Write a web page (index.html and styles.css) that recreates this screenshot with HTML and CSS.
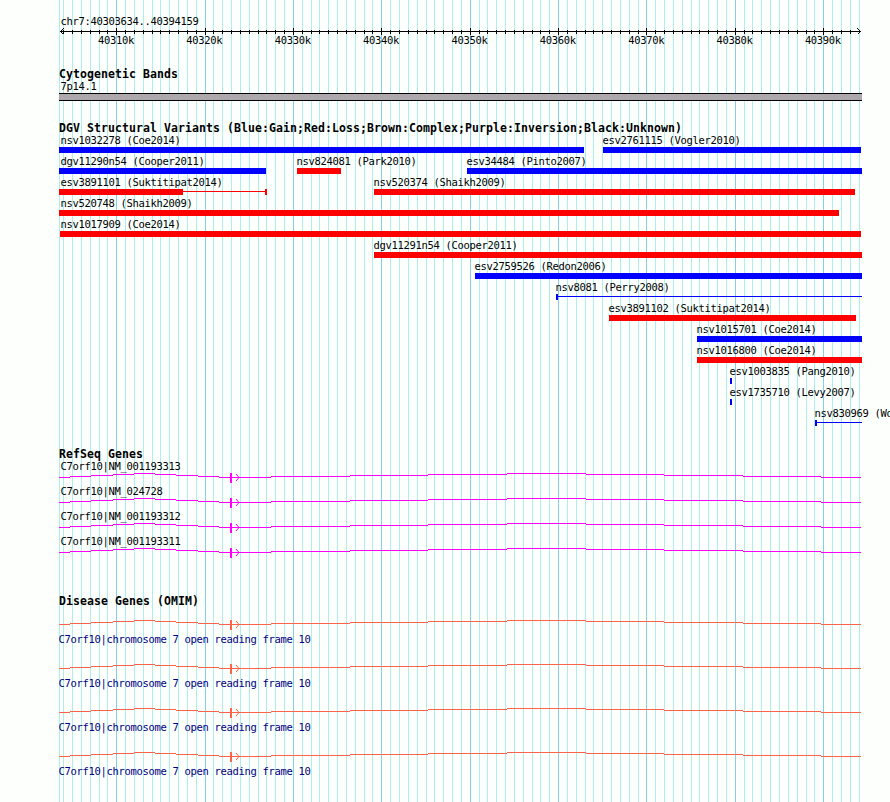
FILE: index.html
```
<!DOCTYPE html>
<html lang="en">
<head>
    <meta charset="UTF-8">
    <title>chr7:40303634..40394159</title>
    <link rel="stylesheet" href="styles.css">
</head>
<body>
    <!-- 1k and 10k grid lines, 8.83734px per kb -->
    <svg class="grid-lines" width="890" height="802" shape-rendering="crispEdges">
        <rect class="edge" x="59" y="0" width="1" height="802"/>
        <path class="minor" d="M63.18 401H862"/>
        <path class="major" d="M116.2 401H862"/>
    </svg>

    <!-- shared gene glyph: intron hat, exon, strand arrow -->
    <svg class="defs" width="0" height="0">
        <symbol id="gene" viewBox="0 0 890 13">
            <path fill="none" stroke="currentColor" shape-rendering="crispEdges" d="M59 5.5H70M70 4.5H91M91 3.5H113M113 2.5H134M134 1.5H155M155 2.5H176M176 3.5H198M198 4.5H219M219 5.5H271M271 4.5H350M350 3.5H428M428 2.5H507M507 1.5H586M586 2.5H664M664 3.5H743M743 4.5H821M821 5.5H861"/>
            <rect fill="currentColor" x="230" y="1" width="2" height="10"/>
            <path fill="none" stroke="currentColor" d="M236 2L239 5.5L236 9"/>
        </symbol>
    </svg>

    <main class="browser">
        <section class="overview">
            <div class="label region">chr7:40303634..40394159</div>
            <svg class="ruler" width="890" height="7" shape-rendering="crispEdges">
                <path class="axis" d="M60 3.5H861"/>
                <path class="ticks" d="M63.18 3.5H856"/>
                <path class="big-ticks" d="M116.2 3.5H856"/>
                <path class="arrow" d="M63.5 0.5L60.5 3.5L63.5 6.5M857.5 0.5L860.5 3.5L857.5 6.5"/>
            </svg>
            <div class="scale">
                <span>40310k</span><span>40320k</span><span>40330k</span><span>40340k</span><span>40350k</span><span>40360k</span><span>40370k</span><span>40380k</span><span>40390k</span>
            </div>
        </section>

        <section class="track cyto">
            <h2>Cytogenetic Bands</h2>
            <div class="label band-name">7p14.1</div>
            <div class="band"></div>
        </section>

        <section class="track variants">
            <h2>DGV Structural Variants (Blue:Gain;Red:Loss;Brown:Complex;Purple:Inversion;Black:Unknown)</h2>
            <div class="row">
                <div class="feature gain clipped" style="margin-left: 59px; width: 525px"><span class="label">nsv1032278 (Coe2014)</span><i class="bar"></i></div>
                <div class="feature gain" style="margin-left: 603px; width: 258px"><span class="label">esv2761115 (Vogler2010)</span><i class="bar"></i></div>
            </div>
            <div class="row">
                <div class="feature gain clipped" style="margin-left: 59px; width: 207px"><span class="label">dgv11290n54 (Cooper2011)</span><i class="bar"></i></div>
                <div class="feature loss" style="margin-left: 297px; width: 44px"><span class="label">nsv824081 (Park2010)</span><i class="bar"></i></div>
                <div class="feature gain" style="margin-left: 467px; width: 395px"><span class="label">esv34484 (Pinto2007)</span><i class="bar"></i></div>
            </div>
            <div class="row">
                <div class="feature loss clipped" style="margin-left: 59px; width: 208px">
                    <span class="label">esv3891101 (Suktitipat2014)</span>
                    <div class="parts"><i class="bar" style="width: 124px"></i><i class="line"></i><i class="cap"></i></div>
                </div>
                <div class="feature loss" style="margin-left: 374px; width: 481px"><span class="label">nsv520374 (Shaikh2009)</span><i class="bar"></i></div>
            </div>
            <div class="row">
                <div class="feature loss clipped" style="margin-left: 59px; width: 780px"><span class="label">nsv520748 (Shaikh2009)</span><i class="bar"></i></div>
            </div>
            <div class="row">
                <div class="feature loss flush" style="margin-left: 60px; width: 801px"><span class="label">nsv1017909 (Coe2014)</span><i class="bar"></i></div>
            </div>
            <div class="row">
                <div class="feature loss" style="margin-left: 374px; width: 488px"><span class="label">dgv11291n54 (Cooper2011)</span><i class="bar"></i></div>
            </div>
            <div class="row">
                <div class="feature gain" style="margin-left: 475px; width: 387px"><span class="label">esv2759526 (Redon2006)</span><i class="bar"></i></div>
            </div>
            <div class="row">
                <div class="feature gain" style="margin-left: 556px; width: 306px">
                    <span class="label">nsv8081 (Perry2008)</span>
                    <div class="parts"><i class="cap"></i><i class="line"></i></div>
                </div>
            </div>
            <div class="row">
                <div class="feature loss" style="margin-left: 609px; width: 247px"><span class="label">esv3891102 (Suktitipat2014)</span><i class="bar"></i></div>
            </div>
            <div class="row">
                <div class="feature gain" style="margin-left: 697px; width: 165px"><span class="label">nsv1015701 (Coe2014)</span><i class="bar"></i></div>
            </div>
            <div class="row">
                <div class="feature loss" style="margin-left: 697px; width: 165px"><span class="label">nsv1016800 (Coe2014)</span><i class="bar"></i></div>
            </div>
            <div class="row">
                <div class="feature gain" style="margin-left: 730px; width: 2px"><span class="label">esv1003835 (Pang2010)</span><i class="bar"></i></div>
            </div>
            <div class="row">
                <div class="feature gain" style="margin-left: 730px; width: 2px"><span class="label">esv1735710 (Levy2007)</span><i class="bar"></i></div>
            </div>
            <div class="row">
                <div class="feature gain" style="margin-left: 815px; width: 47px">
                    <span class="label">nsv830969 (Wong2007)</span>
                    <div class="parts"><i class="cap"></i><i class="line"></i></div>
                </div>
            </div>
        </section>

        <section class="track refseq">
            <h2>RefSeq Genes</h2>
            <div class="gene"><span class="label">C7orf10|NM_001193313</span><svg width="890" height="13"><use href="#gene"/></svg></div>
            <div class="gene"><span class="label">C7orf10|NM_024728</span><svg width="890" height="13"><use href="#gene"/></svg></div>
            <div class="gene"><span class="label">C7orf10|NM_001193312</span><svg width="890" height="13"><use href="#gene"/></svg></div>
            <div class="gene"><span class="label">C7orf10|NM_001193311</span><svg width="890" height="13"><use href="#gene"/></svg></div>
        </section>

        <section class="track omim">
            <h2>Disease Genes (OMIM)</h2>
            <div class="gene"><svg width="890" height="13"><use href="#gene"/></svg><span class="label">C7orf10|chromosome 7 open reading frame 10</span></div>
            <div class="gene"><svg width="890" height="13"><use href="#gene"/></svg><span class="label">C7orf10|chromosome 7 open reading frame 10</span></div>
            <div class="gene"><svg width="890" height="13"><use href="#gene"/></svg><span class="label">C7orf10|chromosome 7 open reading frame 10</span></div>
            <div class="gene"><svg width="890" height="13"><use href="#gene"/></svg><span class="label">C7orf10|chromosome 7 open reading frame 10</span></div>
        </section>
    </main>
</body>
</html>
```
FILE: styles.css
```
* {
    margin: 0;
    padding: 0;
    box-sizing: border-box;
}

body {
    position: relative;
    width: 890px;
    height: 802px;
    overflow: hidden;
    background: #fdfffc;
    color: #000;
    font-family: "DejaVu Sans Mono", monospace;
}

svg {
    display: block;
}

/* background grid */
.grid-lines {
    position: absolute;
    top: 0;
    left: 0;
}

.grid-lines path {
    stroke-width: 802;
}

.edge {
    fill: #afeeee;
}

.minor {
    stroke: #afeeee;
    stroke-dasharray: 1 7.83734;
}

.major {
    stroke: #87ceeb;
    stroke-dasharray: 1 87.3734;
}

.defs {
    position: absolute;
}

.browser {
    position: relative;
    display: flex;
    flex-direction: column;
}

/* text */
.label {
    display: block;
    font-size: 10.5px;
    line-height: 12px;
    letter-spacing: -0.322px;
    text-indent: 0.5px;
    white-space: nowrap;
}

h2 {
    height: 12px;
    padding-left: 59px;
    font-size: 11.5px;
    line-height: 13px;
    letter-spacing: 0.076px;
    white-space: nowrap;
}

/* ruler */
.overview {
    padding-top: 15px;
}

.region {
    padding-left: 60px;
    margin-bottom: 1px;
}

.ruler path {
    fill: none;
    stroke: #000;
}

.ruler .ticks {
    stroke-width: 4;
    stroke-dasharray: 1 7.83734;
}

.ruler .big-ticks {
    stroke-width: 7;
    stroke-dasharray: 1 87.3734;
}

.scale {
    display: flex;
    gap: 52.37px;
    margin-top: -1px;
    padding-left: 98px;
    font-size: 10.5px;
    line-height: 12px;
    letter-spacing: -0.322px;
}

.scale span {
    width: 36px;
}

/* cytogenetic bands */
.cyto {
    padding-top: 22px;
}

.band-name {
    padding-left: 60px;
    margin-bottom: 1px;
}

.band {
    width: 803px;
    height: 8px;
    margin-left: 59px;
    background: #aca8ab;
    border-top: 1px solid #000;
    border-bottom: 1px solid #000;
}

/* structural variants */
.variants {
    padding-top: 21px;
}

.row {
    display: grid;
    grid-template-columns: 890px;
    height: 21px;
}

.feature {
    grid-area: 1 / 1;
}

.feature .label {
    width: 0;
    margin-left: -1px;
    margin-bottom: 1px;
}

.clipped .label {
    margin-left: 1px;
}

.flush .label {
    margin-left: 0;
}

.bar {
    display: block;
    height: 6px;
    background: currentColor;
}

.gain {
    color: #00f;
}

.loss {
    color: #f00;
}

.feature .label,
.refseq .label {
    color: #000;
}

.parts {
    display: flex;
}

.line {
    flex: 1;
    height: 1px;
    margin-top: 2px;
    background: currentColor;
}

.cap {
    width: 2px;
    height: 6px;
    background: currentColor;
}

/* genes */
.refseq {
    padding-top: 20px;
    color: #f0f;
}

.omim {
    padding-top: 35px;
    color: #ff6347;
}

.track h2 {
    color: #000;
}

.refseq .gene {
    height: 25px;
}

.refseq .label {
    padding-left: 60px;
}

.omim .gene {
    height: 44px;
    padding-top: 12px;
}

.omim .label {
    margin-top: 1px;
    padding-left: 58px;
    color: #000080;
}
```
